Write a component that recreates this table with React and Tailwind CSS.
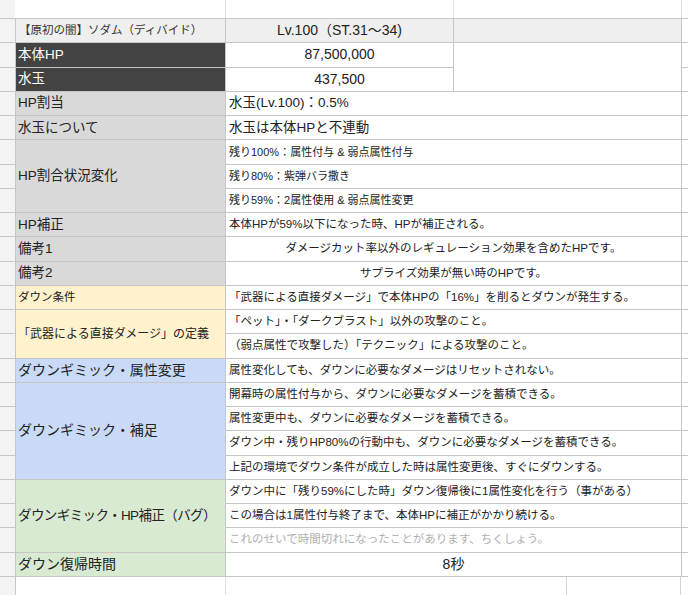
import React from "react";

const RS = [
  "row-start-2", "row-start-3", "row-start-4", "row-start-5", "row-start-6",
  "row-start-7", "row-start-8", "row-start-9", "row-start-10", "row-start-11",
  "row-start-12", "row-start-13", "row-start-14", "row-start-15", "row-start-16",
  "row-start-17", "row-start-18", "row-start-19", "row-start-20", "row-start-21",
  "row-start-22", "row-start-23", "row-start-24", "row-start-25",
];

export default function App() {
  return (
    <div className="w-[688px] h-[595px] overflow-hidden bg-white font-['Liberation_Sans','Noto_Sans_CJK_JP',sans-serif] text-[#222]">
      <div className="grid grid-cols-[15px_209px_227px_227px_6px] grid-rows-[18px_repeat(23,minmax(0,1fr))_18px] gap-px bg-[#c6c6c6] w-[688px] h-[595px]">
        {/* top blank row */}
        <div className="col-start-1 col-span-5 row-start-1 bg-white flex">
          <div className="w-[15px] bg-[#f3f3f3]" />
          <div className="w-[211px] border-r border-[#e2e2e2]" />
          <div className="w-[228px] border-r border-[#e2e2e2]" />
          <div className="w-[228px] border-r border-[#e2e2e2]" />
          <div className="flex-1" />
        </div>

        {/* left strip */}
        {RS.map((r) => (
          <div key={"l" + r} className={`col-start-1 ${r} bg-[#f3f3f3]`} />
        ))}
        {/* right strip */}
        {RS.slice(0, 23).map((r) => (
          <div key={"r" + r} className={`col-start-5 ${r} bg-white`} />
        ))}

        {/* Row 1 header */}
        <div className="col-start-2 row-start-2 bg-[#efefef] flex items-center pl-[3px] text-[11.5px] text-[#333]">
          【原初の闇】ソダム（ディバイド）
        </div>
        <div className="col-start-3 row-start-2 bg-[#efefef] flex items-center justify-center text-[14px]">
          Lv.100（ST.31〜34)
        </div>
        <div className="col-start-4 row-start-2 bg-[#efefef]" />

        {/* Row 2-3 */}
        <div className="col-start-2 row-start-3 bg-[#434343] flex items-center pl-[2px] text-[13.5px] text-white">
          本体HP
        </div>
        <div className="col-start-3 row-start-3 bg-white flex items-center justify-center text-[14px]">
          87,500,000
        </div>
        <div className="col-start-4 row-start-3 row-span-2 bg-white" />
        <div className="col-start-2 row-start-4 bg-[#434343] flex items-center pl-[2px] text-[13.5px] text-white">
          水玉
        </div>
        <div className="col-start-3 row-start-4 bg-white flex items-center justify-center text-[14px]">
          437,500
        </div>

        {/* Row 4 */}
        <div className="col-start-2 row-start-5 bg-[#d9d9d9] flex items-center pl-[2px] text-[13.5px]">
          HP割当
        </div>
        <div className="col-start-3 col-span-2 row-start-5 bg-white flex items-center pl-[3px] text-[13.5px]">
          水玉(Lv.100)：0.5%
        </div>

        {/* Row 5 */}
        <div className="col-start-2 row-start-6 bg-[#d9d9d9] flex items-center pl-[2px] text-[13.5px]">
          水玉について
        </div>
        <div className="col-start-3 col-span-2 row-start-6 bg-white flex items-center pl-[3px] text-[13.5px]">
          水玉は本体HPと不連動
        </div>

        {/* Rows 6-8 */}
        <div className="col-start-2 row-start-7 row-span-3 bg-[#d9d9d9] flex items-center pl-[2px] text-[13.5px]">
          HP割合状況変化
        </div>
        <div className="col-start-3 col-span-2 row-start-7 bg-white flex items-center pl-[3px] text-[11px]">
          残り100%：属性付与 &amp; 弱点属性付与
        </div>
        <div className="col-start-3 col-span-2 row-start-8 bg-white flex items-center pl-[3px] text-[11px]">
          残り80%：紫弾バラ撒き
        </div>
        <div className="col-start-3 col-span-2 row-start-9 bg-white flex items-center pl-[3px] text-[11px]">
          残り59%：2属性使用 &amp; 弱点属性変更
        </div>

        {/* Row 9 */}
        <div className="col-start-2 row-start-10 bg-[#d9d9d9] flex items-center pl-[2px] text-[13.5px]">
          HP補正
        </div>
        <div className="col-start-3 col-span-2 row-start-10 bg-white flex items-center pl-[3px] text-[11.5px]">
          本体HPが59%以下になった時、HPが補正される。
        </div>

        {/* Row 10 */}
        <div className="col-start-2 row-start-11 bg-[#d9d9d9] flex items-center pl-[2px] text-[13.5px]">
          備考1
        </div>
        <div className="col-start-3 col-span-2 row-start-11 bg-white flex items-center justify-center text-[11.5px]">
          ダメージカット率以外のレギュレーション効果を含めたHPです。
        </div>

        {/* Row 11 */}
        <div className="col-start-2 row-start-12 bg-[#d9d9d9] flex items-center pl-[2px] text-[13.5px]">
          備考2
        </div>
        <div className="col-start-3 col-span-2 row-start-12 bg-white flex items-center justify-center text-[11.5px]">
          サプライズ効果が無い時のHPです。
        </div>

        {/* Row 12 */}
        <div className="col-start-2 row-start-13 bg-[#fff2cc] flex items-center pl-[2px] text-[11.5px]">
          ダウン条件
        </div>
        <div className="col-start-3 col-span-2 row-start-13 bg-white flex items-center pl-[3px] text-[11.5px]">
          「武器による直接ダメージ」で本体HPの「16%」を削るとダウンが発生する。
        </div>

        {/* Rows 13-14 */}
        <div className="col-start-2 row-start-14 row-span-2 bg-[#fff2cc] flex items-center pl-[2px] text-[12px]">
          「武器による直接ダメージ」の定義
        </div>
        <div className="col-start-3 col-span-2 row-start-14 bg-white flex items-center pl-[3px] text-[11.5px]">
          「ペット」・「ダークブラスト」以外の攻撃のこと。
        </div>
        <div className="col-start-3 col-span-2 row-start-15 bg-white flex items-center pl-[3px] text-[11.5px]">
          （弱点属性で攻撃した）「テクニック」による攻撃のこと。
        </div>

        {/* Row 15 */}
        <div className="col-start-2 row-start-16 bg-[#c9daf8] flex items-center pl-[2px] text-[14px]">
          ダウンギミック・属性変更
        </div>
        <div className="col-start-3 col-span-2 row-start-16 bg-white flex items-center pl-[3px] text-[11.5px]">
          属性変化しても、ダウンに必要なダメージはリセットされない。
        </div>

        {/* Rows 16-19 */}
        <div className="col-start-2 row-start-17 row-span-4 bg-[#c9daf8] flex items-center pl-[2px] text-[14px]">
          ダウンギミック・補足
        </div>
        <div className="col-start-3 col-span-2 row-start-17 bg-white flex items-center pl-[3px] text-[11.5px]">
          開幕時の属性付与から、ダウンに必要なダメージを蓄積できる。
        </div>
        <div className="col-start-3 col-span-2 row-start-18 bg-white flex items-center pl-[3px] text-[11.5px]">
          属性変更中も、ダウンに必要なダメージを蓄積できる。
        </div>
        <div className="col-start-3 col-span-2 row-start-19 bg-white flex items-center pl-[3px] text-[11.5px]">
          ダウン中・残りHP80%の行動中も、ダウンに必要なダメージを蓄積できる。
        </div>
        <div className="col-start-3 col-span-2 row-start-20 bg-white flex items-center pl-[3px] text-[11.5px]">
          上記の環境でダウン条件が成立した時は属性変更後、すぐにダウンする。
        </div>

        {/* Rows 20-22 */}
        <div className="col-start-2 row-start-21 row-span-3 bg-[#d9ead3] flex items-center pl-[2px] text-[13.5px] tracking-[-0.6px] whitespace-nowrap overflow-hidden">
          ダウンギミック・HP補正（バグ）
        </div>
        <div className="col-start-3 col-span-2 row-start-21 bg-white flex items-center pl-[3px] text-[11.5px]">
          ダウン中に「残り59%にした時」ダウン復帰後に1属性変化を行う（事がある）
        </div>
        <div className="col-start-3 col-span-2 row-start-22 bg-white flex items-center pl-[3px] text-[11.5px]">
          この場合は1属性付与終了まで、本体HPに補正がかかり続ける。
        </div>
        <div className="col-start-3 col-span-2 row-start-23 bg-white flex items-center pl-[3px] text-[11.5px] text-[#b0b0b0]">
          これのせいで時間切れになったことがあります、ちくしょう。
        </div>

        {/* Row 23 */}
        <div className="col-start-2 row-start-24 bg-[#d9ead3] flex items-center pl-[2px] text-[14px]">
          ダウン復帰時間
        </div>
        <div className="col-start-3 col-span-2 row-start-24 bg-white flex items-center justify-center text-[14px]">
          8秒
        </div>

        {/* bottom blank row */}
        <div className="col-start-2 col-span-4 row-start-25 bg-white flex">
          <div className="w-[210px] border-r border-[#e2e2e2]" />
          <div className="w-[341px] border-r border-[#d4d4d4]" />
          <div className="w-[114px] border-r border-[#d4d4d4]" />
          <div className="flex-1" />
        </div>
      </div>
    </div>
  );
}
